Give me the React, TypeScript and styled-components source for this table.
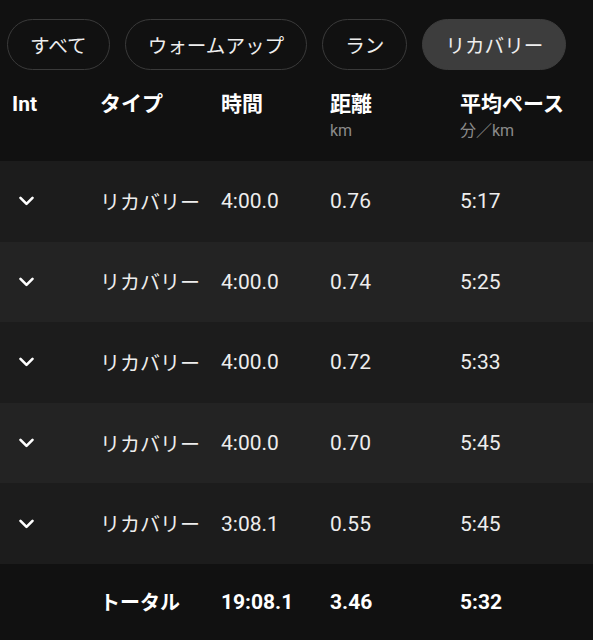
import React from "react";
import styled, { createGlobalStyle } from "styled-components";

const GlobalStyle = createGlobalStyle`
  html, body {
    margin: 0;
    padding: 0;
    background: #111111;
  }
  body {
    font-family: Roboto, "Noto Sans CJK JP", sans-serif;
    color: #f2f2f2;
  }
`;

const Page = styled.div`
  width: 593px;
  height: 640px;
  background: #111111;
  overflow: hidden;
  display: flex;
  flex-direction: column;
`;

const ChipBar = styled.div`
  display: flex;
  gap: 15px;
  padding: 19px 0 0 7px;
`;

const Chip = styled.div<{ $active?: boolean }>`
  height: 51px;
  box-sizing: border-box;
  padding: 0 22px;
  border-radius: 26px;
  display: flex;
  align-items: center;
  font-size: 19.6px;
  color: #eeeeee;
  border: 1.5px solid ${(p) => (p.$active ? "#3d3d3d" : "#3a3a3a")};
  background: ${(p) => (p.$active ? "#3d3d3d" : "transparent")};
`;

const Grid = styled.div`
  display: grid;
  grid-template-columns: 88px 121px 109px 130px 1fr;
  padding-left: 12px;
  align-items: center;
`;

const HeaderRow = styled(Grid)`
  height: 91px;
  align-items: start;
  padding-top: 23px;
  box-sizing: border-box;
`;

const HeadCell = styled.div`
  display: flex;
  flex-direction: column;
`;

const HeadTitle = styled.span`
  font-size: 21px;
  font-weight: 700;
  line-height: 22px;
  color: #ffffff;
`;

const HeadSub = styled.span`
  font-size: 16px;
  line-height: 18px;
  margin-top: 7px;
  color: #8a8a8a;
`;

const Row = styled(Grid)<{ $shade: "odd" | "even" | "total" }>`
  height: 80.6px;
  background: ${(p) =>
    p.$shade === "odd" ? "#1c1c1c" : p.$shade === "even" ? "#232323" : "#111111"};
`;

const TotalRow = styled(Row)`
  height: 76px;
`;

const Cell = styled.div<{ $bold?: boolean; $num?: boolean }>`
  font-size: ${(p) => (p.$num ? "21px" : "20px")};
  font-weight: ${(p) => (p.$bold ? 700 : 400)};
  color: ${(p) => (p.$bold ? "#ffffff" : "#ededed")};
  white-space: nowrap;
`;

const ChevronBox = styled.div`
  display: flex;
  align-items: center;
  padding-left: 7px;
`;

const Chevron = () => (
  <svg width="15" height="10" viewBox="0 0 15 10">
    <polyline
      points="1.5,1.8 7.5,7.8 13.5,1.8"
      fill="none"
      stroke="#ffffff"
      strokeWidth="2.6"
      strokeLinecap="round"
      strokeLinejoin="round"
    />
  </svg>
);

const chips = ["すべて", "ウォームアップ", "ラン", "リカバリー"];

const rows = [
  { type: "リカバリー", time: "4:00.0", dist: "0.76", pace: "5:17" },
  { type: "リカバリー", time: "4:00.0", dist: "0.74", pace: "5:25" },
  { type: "リカバリー", time: "4:00.0", dist: "0.72", pace: "5:33" },
  { type: "リカバリー", time: "4:00.0", dist: "0.70", pace: "5:45" },
  { type: "リカバリー", time: "3:08.1", dist: "0.55", pace: "5:45" },
];

export default function App() {
  return (
    <Page>
      <GlobalStyle />
      <ChipBar>
        {chips.map((c, i) => (
          <Chip key={c} $active={i === 3}>
            {c}
          </Chip>
        ))}
      </ChipBar>
      <HeaderRow>
        <HeadCell>
          <HeadTitle>Int</HeadTitle>
        </HeadCell>
        <HeadCell>
          <HeadTitle>タイプ</HeadTitle>
        </HeadCell>
        <HeadCell>
          <HeadTitle>時間</HeadTitle>
        </HeadCell>
        <HeadCell>
          <HeadTitle>距離</HeadTitle>
          <HeadSub>km</HeadSub>
        </HeadCell>
        <HeadCell>
          <HeadTitle>平均ペース</HeadTitle>
          <HeadSub>分／km</HeadSub>
        </HeadCell>
      </HeaderRow>
      {rows.map((r, i) => (
        <Row key={i} $shade={i % 2 === 0 ? "odd" : "even"}>
          <ChevronBox>
            <Chevron />
          </ChevronBox>
          <Cell>{r.type}</Cell>
          <Cell $num>{r.time}</Cell>
          <Cell $num>{r.dist}</Cell>
          <Cell $num>{r.pace}</Cell>
        </Row>
      ))}
      <TotalRow $shade="total">
        <div />
        <Cell $bold>トータル</Cell>
        <Cell $bold $num>19:08.1</Cell>
        <Cell $bold $num>3.46</Cell>
        <Cell $bold $num>5:32</Cell>
      </TotalRow>
    </Page>
  );
}
